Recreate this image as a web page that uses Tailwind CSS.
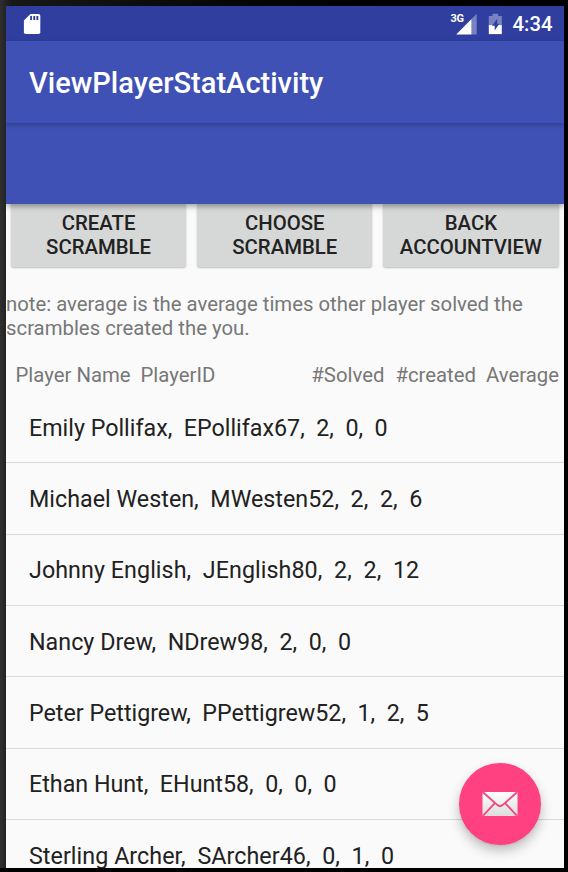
<!DOCTYPE html>
<html lang="en">
<head>
<meta charset="utf-8">
<title>ViewPlayerStatActivity</title>
<script src="https://cdn.jsdelivr.net/npm/@tailwindcss/browser@4"></script>
</head>
<body class="h-[872px] w-[568px] overflow-hidden bg-linear-to-r from-[#303030] via-[#181818] via-[2%] to-black pt-[6px] pr-[4px] pb-[4px] pl-[6px] font-[Roboto,sans-serif] shadow-[inset_0_-4px_0_#000]">
<main class="relative flex h-[862px] w-[558px] flex-col overflow-hidden bg-[#fafafa]">
  <header class="relative z-20 shrink-0">
    <div class="flex h-[35px] items-center bg-[#303f9f] pr-[11.5px] pl-[17px] text-white">
      <svg class="mt-px h-[22px] w-[18px]" viewBox="0 0 18 22" fill="none"><path fill="#fff" d="M7.5 1H15.5Q17.3 1 17.3 2.8V19.2Q17.3 21 15.5 21H2.7Q.9 21 .9 19.2V7.4Z"/><path fill="#303f9f" d="M7.2 3h1.8v4H7.2zM10.3 3h1.9v4h-1.9zM13.4 3h1.9v4h-1.9z"/></svg>
      <div class="ml-auto flex items-center">
        <div class="relative h-[22px] w-[26px]">
          <span class="absolute top-px left-0 text-[11px] leading-[10px] font-bold tracking-[-0.3px]">3G</span>
          <svg class="absolute inset-0 h-[22px] w-[26px]" viewBox="0 0 26 22"><path fill="#fff" fill-opacity=".35" d="M20.5 6L25.7 .8V21.5H20.5z"/><path fill="#fff" d="M5.2 21.5L20.5 6V21.5z"/></svg>
        </div>
        <svg class="ml-[11px] h-[22px] w-[15px]" viewBox="0 0 15 22"><path fill="#fff" fill-opacity=".35" d="M4.5.7h5.7v2.2h3.6v9.2H.8V2.9h3.7z"/><path fill="#fff" d="M.8 12.1h13v9H.8z"/><path fill="#303f9f" d="M9.2 5.8L4 12.8H6.7V17.6L11.2 10.8H9.2z"/></svg>
        <span class="ml-[10px] text-[20.3px] leading-[24px] font-medium">4:34</span>
      </div>
    </div>
    <div class="relative z-10 flex h-[82px] items-center bg-[#3f51b5] pl-[23px] shadow-[0_2px_5px_rgba(0,0,0,0.25)]">
      <h1 class="mt-[2px] text-[29.06px] leading-[34px] font-medium whitespace-nowrap text-white">ViewPlayerStatActivity</h1>
    </div>
    <div class="h-[81px] bg-[#3f51b5] shadow-[0_2px_6px_rgba(0,0,0,0.4)]"></div>
  </header>

  <div class="flex shrink-0 gap-[11px] px-[5px] pr-[5.5px] text-center text-[20.34px] leading-[24px] font-medium text-[#222]">
    <button class="h-[62.5px] flex-1 rounded-b-[3px] bg-[#d6d7d7] shadow-[0_1px_2px_rgba(0,0,0,0.25)]">CREATE<br>SCRAMBLE</button>
    <button class="h-[62.5px] flex-1 rounded-b-[3px] bg-[#d6d7d7] shadow-[0_1px_2px_rgba(0,0,0,0.25)]">CHOOSE<br>SCRAMBLE</button>
    <button class="h-[62.5px] flex-1 rounded-b-[3px] bg-[#d6d7d7] shadow-[0_1px_2px_rgba(0,0,0,0.25)]">BACK<br>ACCOUNTVIEW</button>
  </div>

  <p class="mt-[25.5px] shrink-0 text-[20.34px] leading-[24px] whitespace-nowrap text-[#777]">note: average is the average times other player solved the<br>scrambles created the you.</p>

  <div class="mt-[23px] flex h-[24px] shrink-0 pr-[5px] pl-[9.5px] text-[20.34px] leading-[24px] whitespace-nowrap text-[#777]">
    <span>Player Name</span>
    <span class="ml-[10px]">PlayerID</span>
    <span class="ml-auto">#Solved</span>
    <span class="ml-[11px]">#created</span>
    <span class="ml-[10px]">Average</span>
  </div>

  <ul class="mt-[5px] shrink-0 text-[23.25px] leading-[28px] text-[#212121]">
    <li class="flex h-[71.35px] items-center border-b border-[#dadada] pt-px pl-[23px] whitespace-pre">Emily Pollifax,  EPollifax67,  2,  0,  0</li>
    <li class="flex h-[71.35px] items-center border-b border-[#dadada] pt-px pl-[23px] tracking-[0.03px] whitespace-pre">Michael Westen,  MWesten52,  2,  2,  6</li>
    <li class="flex h-[71.35px] items-center border-b border-[#dadada] pt-px pl-[23px] tracking-[0.07px] whitespace-pre">Johnny English,  JEnglish80,  2,  2,  12</li>
    <li class="flex h-[71.35px] items-center border-b border-[#dadada] pt-px pl-[23px] tracking-[0.02px] whitespace-pre">Nancy Drew,  NDrew98,  2,  0,  0</li>
    <li class="flex h-[71.35px] items-center border-b border-[#dadada] pt-px pl-[23px] whitespace-pre">Peter Pettigrew,  PPettigrew52,  1,  2,  5</li>
    <li class="flex h-[71.35px] items-center border-b border-[#dadada] pt-px pl-[23px] whitespace-pre">Ethan Hunt,  EHunt58,  0,  0,  0</li>
    <li class="flex h-[71.35px] items-center pt-px pl-[23px] tracking-[0.06px] whitespace-pre">Sterling Archer,  SArcher46,  0,  1,  0</li>
  </ul>

  <button aria-label="Email" class="absolute right-[23px] bottom-[23px] flex size-[82px] items-center justify-center rounded-full bg-[#ff4081] shadow-[0_6px_12px_rgba(0,0,0,0.24),0_1px_3px_rgba(0,0,0,0.08)]">
    <svg class="h-[26px] w-[36px]" viewBox="0 0 36 26">
      <defs><linearGradient id="paper" x1="0" y1="0" x2="0" y2="1"><stop offset="0" stop-color="#fff"/><stop offset="1" stop-color="#dcdcdc"/></linearGradient></defs>
      <rect x=".5" y="1" width="35" height="24" rx="1" fill="url(#paper)"/>
      <path d="M1 1.3L15.5 14.1Q18 16.2 20.5 14.1L35 1.3M1.2 24.7L12.8 12.1M34.8 24.7L23.2 12.1" fill="none" stroke="#f14a80" stroke-width="1.9"/>
    </svg>
  </button>
</main>
</body>
</html>
